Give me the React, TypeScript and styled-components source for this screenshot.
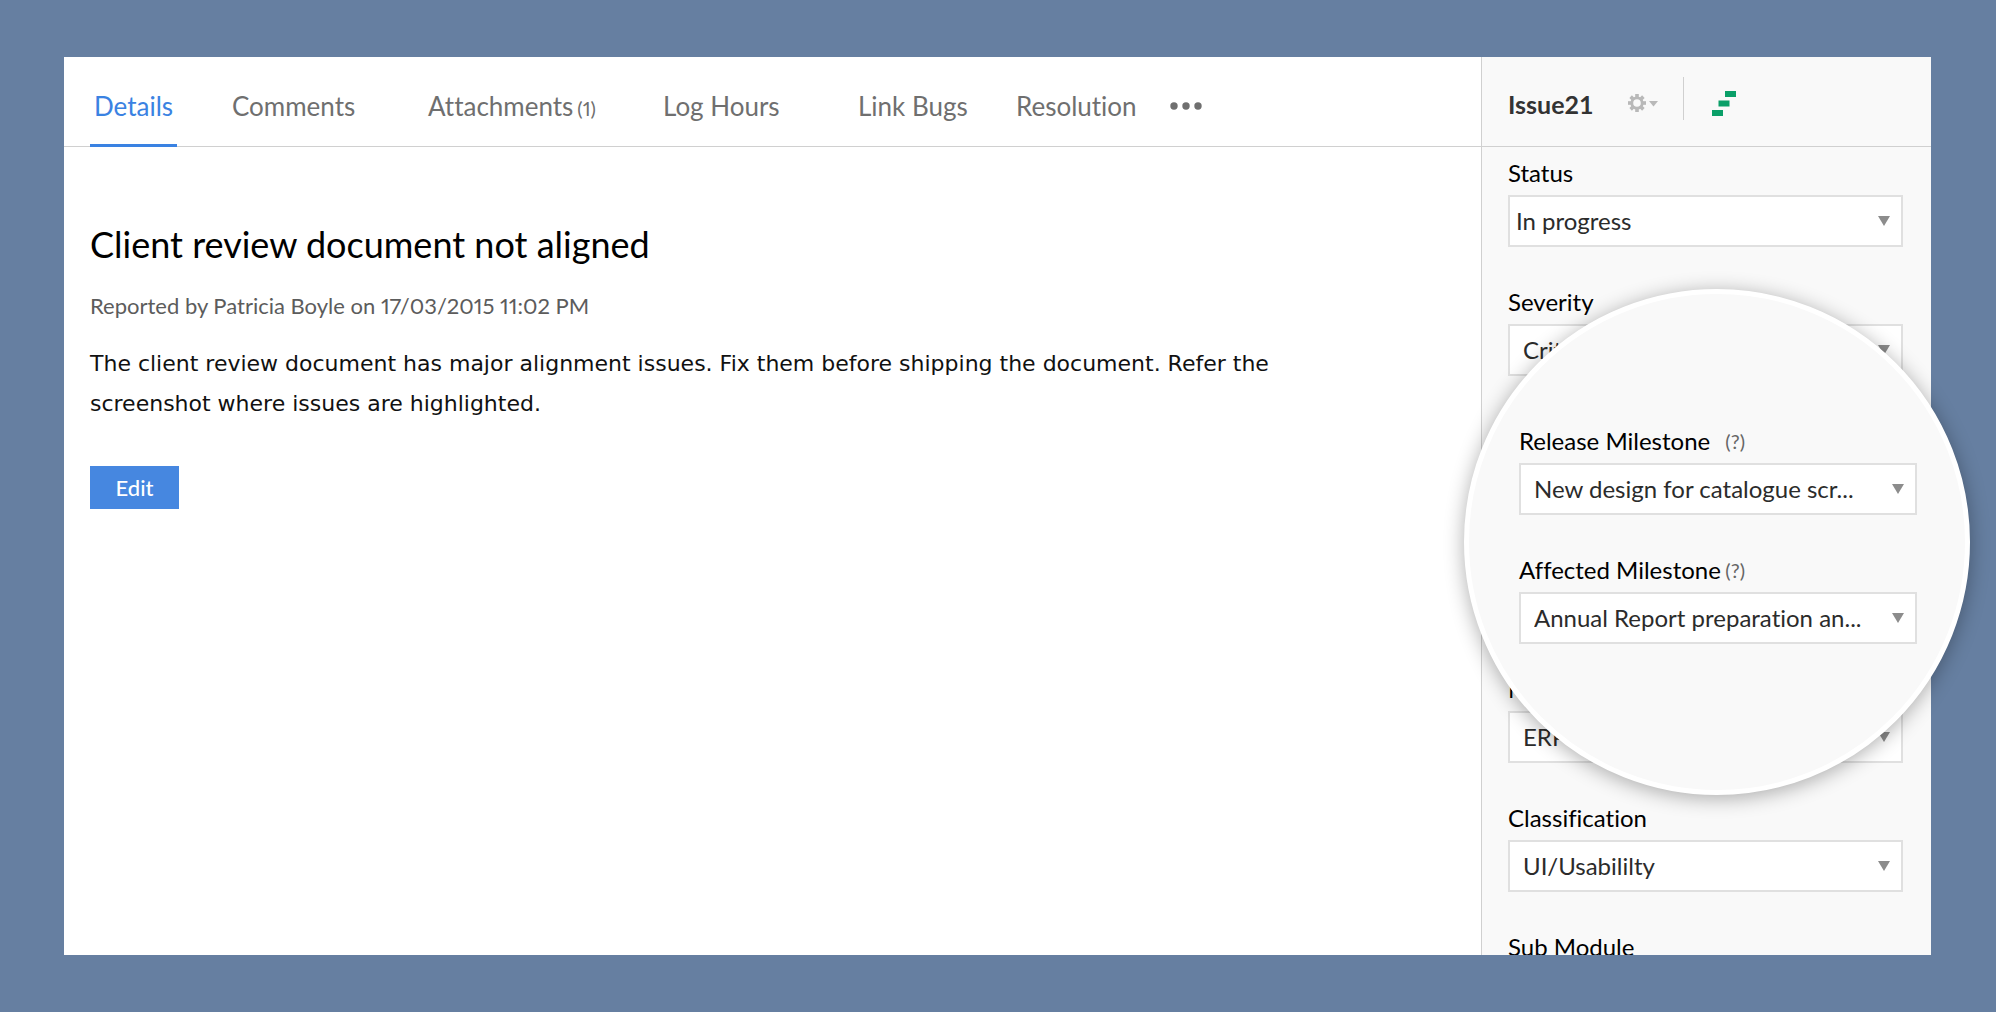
import React from "react";
import styled, { createGlobalStyle } from "styled-components";

const GlobalStyle = createGlobalStyle`
  *, *::before, *::after { box-sizing: border-box; }
  body {
    margin: 0;
    background: #667fa1;
    font-family: Lato, "Open Sans", sans-serif;
    font-variant-ligatures: none;
    color: #000;
  }
`;

const Page = styled.div`
  display: flex;
  height: 100vh;
  padding: 57px 65px 57px 64px;
`;

const Panel = styled.div`
  display: flex;
  flex: 1;
  min-width: 0;
  background: #fff;
`;

const Main = styled.main`
  flex: 1;
  min-width: 0;
`;

const Tabs = styled.nav`
  display: grid;
  grid-template-columns: 138px 196px 235px 195px 158px 154px auto;
  justify-content: start;
  justify-items: start;
  height: 90px;
  padding-left: 26px;
  border-bottom: 1px solid #d0d0d0;
`;

const Tab = styled.a<{ $active?: boolean }>`
  height: 90px;
  padding: 0 4px;
  border-bottom: 3px solid ${(p) => (p.$active ? "#3a82e2" : "transparent")};
  color: ${(p) => (p.$active ? "#3a82e2" : "#6f6f6f")};
  font-size: 26px;
  line-height: 98px;
  text-decoration: none;
  white-space: nowrap;
`;

const Count = styled.span`
  margin-left: 4px;
  font-size: 20px;
  font-variant-numeric: proportional-nums;
`;

const MoreButton = styled.button`
  display: flex;
  align-items: center;
  height: 98px;
  padding: 0 4px;
  border: 0;
  background: none;
`;

const Article = styled.article`
  padding: 75px 26px 0;
`;

const Title = styled.h1`
  margin: 0;
  font-size: 36px;
  font-weight: 400;
  line-height: 44px;
`;

const Reported = styled.p`
  margin: 26px 0 0;
  color: #5c5c5c;
  font-size: 22px;
  font-variant-numeric: proportional-nums;
  line-height: 28px;
`;

const Description = styled.p`
  max-width: 1240px;
  margin: 24px 0 0;
  color: #111;
  font-family: "DejaVu Sans", sans-serif;
  font-size: 22px;
  line-height: 40px;
`;

const EditButton = styled.button`
  margin-top: 42px;
  width: 89px;
  height: 43px;
  padding: 0 0 1px;
  border: 0;
  background: #4687e0;
  color: #fff;
  font-family: inherit;
  font-size: 22px;
  font-weight: 500;
`;

const Sidebar = styled.aside`
  position: relative;
  display: flex;
  flex: 0 0 450px;
  flex-direction: column;
  border-left: 1px solid #d0d0d0;
  background: #f9f9f9;
`;

const SideHeader = styled.header`
  display: flex;
  flex: none;
  align-items: center;
  height: 90px;
  padding: 4px 26px 0;
  border-bottom: 1px solid #d0d0d0;
`;

const IssueName = styled.h2`
  margin: 0;
  color: #333;
  font-size: 25px;
  font-weight: 700;
  line-height: 32px;
`;

const GearButton = styled.button`
  display: flex;
  align-items: center;
  margin: 0 0 2px 34px;
  padding: 0;
  border: 0;
  background: none;
`;

const Divider = styled.span`
  width: 1px;
  height: 43px;
  margin: 0 28px 10px 25px;
  background: #d0d0d0;
`;

const StepsButton = styled.button`
  display: flex;
  padding: 0;
  border: 0;
  background: none;
`;

const Fields = styled.div`
  display: grid;
  flex: 1;
  grid-auto-rows: 129px;
  align-content: start;
  min-height: 0;
  padding: 12px 28px 0 26px;
  overflow: hidden;
`;

const FieldBox = styled.div<{ $row?: number }>`
  display: flex;
  flex-direction: column;
  gap: 8px;
  grid-row: ${(p) => p.$row ?? "auto"};
`;

const LabelLine = styled.div`
  display: flex;
  align-items: center;
  justify-content: space-between;
  line-height: 28px;
`;

const Label = styled.label`
  font-size: 24px;
`;

const Hint = styled.span`
  color: #666;
  font-size: 20px;
`;

const SelectWrap = styled.div`
  position: relative;
  display: flex;
`;

const Select = styled.select<{ $inset: number }>`
  appearance: none;
  width: 100%;
  height: 52px;
  padding: 0 36px 2px ${(p) => p.$inset}px;
  border: 2px solid #e0e0e0;
  border-radius: 0;
  background: #fff;
  color: #2b2b2b;
  font-family: inherit;
  font-size: 24px;
  font-variant-ligatures: none;
`;

const Caret = styled.svg`
  position: absolute;
  top: 21px;
  right: 13px;
  pointer-events: none;
`;

const Lens = styled.section`
  position: absolute;
  top: 232px;
  right: -39px;
  display: flex;
  flex-direction: column;
  gap: 41px;
  width: 506px;
  height: 506px;
  padding: 133px 48px 0 50px;
  border: 5px solid #fff;
  border-radius: 50%;
  background: #f9f9f9;
  box-shadow: 0 3px 20px rgba(0, 0, 0, 0.32);
`;

const LensLabel = styled(LabelLine)`
  width: 226px;
`;

type FieldProps = {
  id: string;
  label: string;
  value: string;
  inset?: number;
  row?: number;
  hint?: boolean;
};

function Field({ id, label, value, inset = 13, row, hint }: FieldProps) {
  const Line = hint ? LensLabel : LabelLine;
  return (
    <FieldBox $row={row}>
      <Line>
        <Label htmlFor={id}>{label}</Label>
        {hint && <Hint>(?)</Hint>}
      </Line>
      <SelectWrap>
        <Select id={id} $inset={inset}>
          <option>{value}</option>
        </Select>
        <Caret width="12" height="10" viewBox="0 0 12 10" aria-hidden="true">
          <path d="M0 0H12L6 10Z" fill="#8c8c8c" />
        </Caret>
      </SelectWrap>
    </FieldBox>
  );
}

const GEAR_ANGLES = [0, 45, 90, 135, 180, 225, 270, 315];

function GearIcon() {
  return (
    <svg width="30" height="18" viewBox="0 0 30 18" aria-hidden="true">
      <circle cx="9" cy="9" r="5.2" fill="none" stroke="#b9b9b9" strokeWidth="2.8" />
      {GEAR_ANGLES.map((a) => (
        <rect key={a} x="7.2" y="0" width="3.6" height="4" fill="#b9b9b9" transform={`rotate(${a} 9 9)`} />
      ))}
      <path d="M21 7H30L25.5 12.5Z" fill="#b9b9b9" />
    </svg>
  );
}

export default function App() {
  return (
    <>
      <GlobalStyle />
      <Page>
        <Panel>
          <Main>
            <Tabs aria-label="Issue sections">
              <Tab href="#details" $active>Details</Tab>
              <Tab href="#comments">Comments</Tab>
              <Tab href="#attachments">
                Attachments<Count>(1)</Count>
              </Tab>
              <Tab href="#log-hours">Log Hours</Tab>
              <Tab href="#link-bugs">Link Bugs</Tab>
              <Tab href="#resolution">Resolution</Tab>
              <MoreButton aria-label="More">
                <svg width="32" height="8" viewBox="0 0 32 8" fill="#6f6f6f" aria-hidden="true">
                  <circle cx="4" cy="4" r="3.7" />
                  <circle cx="16" cy="4" r="3.7" />
                  <circle cx="28" cy="4" r="3.7" />
                </svg>
              </MoreButton>
            </Tabs>
            <Article>
              <Title>Client review document not aligned</Title>
              <Reported>Reported by Patricia Boyle on 17/03/2015 11:02 PM</Reported>
              <Description>
                The client review document has major alignment issues. Fix them before shipping the
                document. Refer the screenshot where issues are highlighted.
              </Description>
              <EditButton>Edit</EditButton>
            </Article>
          </Main>
          <Sidebar>
            <SideHeader>
              <IssueName>Issue21</IssueName>
              <GearButton aria-label="Settings">
                <GearIcon />
              </GearButton>
              <Divider />
              <StepsButton aria-label="Timeline">
                <svg width="25" height="26" viewBox="0 0 25 26" fill="#0a9f68" aria-hidden="true">
                  <rect x="13" y="0" width="11" height="6" />
                  <rect x="6.5" y="9.5" width="11" height="6" />
                  <rect x="0" y="19" width="11" height="6" />
                </svg>
              </StepsButton>
            </SideHeader>
            <Fields>
              <Field id="status" label="Status" value="In progress" inset={6} row={1} />
              <Field id="severity" label="Severity" value="Critical" row={2} />
              <Field id="module" label="Module" value="ERP" row={5} />
              <Field id="classification" label="Classification" value="UI/Usabililty" row={6} />
              <Field id="sub-module" label="Sub Module" value="" row={7} />
            </Fields>
            <Lens aria-label="Milestones">
              <Field id="release" label="Release Milestone" value="New design for catalogue scr..." hint />
              <Field id="affected" label="Affected Milestone" value="Annual Report preparation an..." hint />
            </Lens>
          </Sidebar>
        </Panel>
      </Page>
    </>
  );
}
